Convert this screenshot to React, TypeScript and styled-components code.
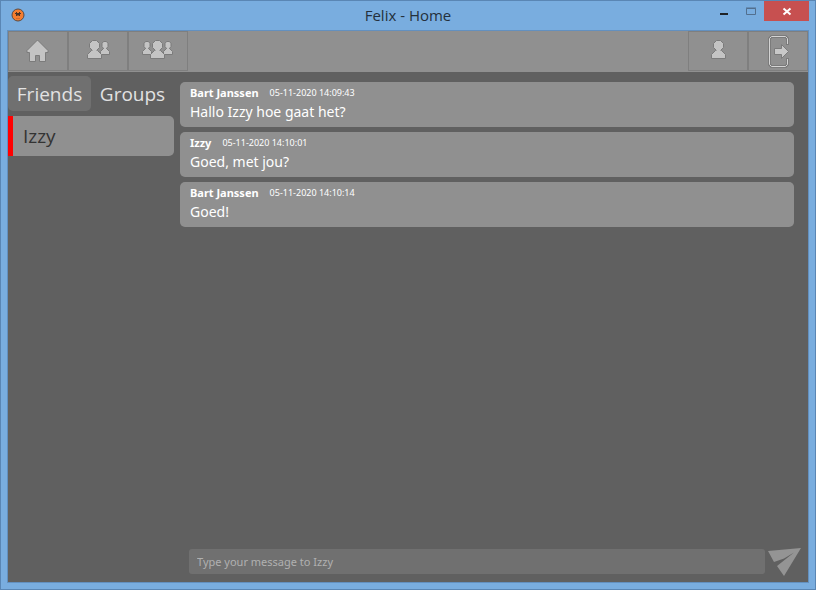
import React, { useState } from "react";
import styled, { createGlobalStyle } from "styled-components";

const GlobalStyle = createGlobalStyle`
  *, *::before, *::after { box-sizing: border-box; }
  body { margin: 0; }
  body, button, input { font-family: "Noto Sans", "Open Sans", sans-serif; }
  button { border: 0; padding: 0; background: none; cursor: pointer; }
`;

const WindowFrame = styled.div`
  display: flex;
  flex-direction: column;
  height: 100vh;
  padding: 0 6px 6px;
  border: 1px solid #5a86b4;
  background: #79addf;
`;

const TitleBar = styled.header`
  display: grid;
  grid-template-columns: 1fr auto 1fr;
  height: 29px;
  flex: none;
`;

const AppIcon = styled.svg`
  display: block;
  margin: 7px 0 0 4px;
`;

const Title = styled.h1`
  margin: 0;
  font-family: "Open Sans", "Noto Sans", sans-serif;
  font-size: 15px;
  font-weight: 400;
  line-height: 29px;
  color: #24303c;
`;

const WindowControls = styled.div`
  display: flex;
  justify-content: flex-end;
  align-items: flex-start;
`;

const WindowButton = styled.button<{ $close?: boolean }>`
  width: ${(p) => (p.$close ? 45 : 27)}px;
  height: 20px;
  background: ${(p) => (p.$close ? "#c75050" : "transparent")};

  svg { display: block; margin: 0 auto; }
`;

const Client = styled.div`
  display: flex;
  flex-direction: column;
  flex: 1;
  min-height: 0;
  border: 1px solid #6390bf;
  background: #606060;
`;

const Toolbar = styled.nav`
  display: flex;
  flex: none;
  height: 41px;
  background: #909090;
`;

const ToolGroup = styled.div<{ $end?: boolean }>`
  display: flex;
  margin-left: ${(p) => (p.$end ? "auto" : "0")};
`;

const ToolButton = styled.button`
  width: 60px;
  height: 40px;
  border: 1px solid #7f7f7f;

  svg { display: block; margin: 0 auto; }
`;

const Content = styled.div`
  display: flex;
  flex: 1;
  min-height: 0;
`;

const Sidebar = styled.aside`
  flex: none;
  width: 166px;
  padding-top: 4px;
`;

const Tabs = styled.div`
  display: flex;
  margin-bottom: 5px;
`;

const Tab = styled.button<{ $active: boolean }>`
  height: 35px;
  flex: 1 1 0;
  padding-top: 2px;
  border-radius: 5px;
  font-family: "Open Sans", "Noto Sans", sans-serif;
  font-size: 19px;
  line-height: 33px;
  color: #e2e2e2;
  background: ${(p) => (p.$active ? "#707070" : "transparent")};
`;

const Contact = styled.button`
  display: block;
  width: 100%;
  height: 40px;
  padding-left: 10px;
  border-left: 5px solid #ff0000;
  border-radius: 0 5px 5px 0;
  font-family: "Open Sans", "Noto Sans", sans-serif;
  font-size: 19px;
  line-height: 40px;
  text-align: left;
  color: #333333;
  background: #909090;
`;

const Chat = styled.main`
  display: flex;
  flex-direction: column;
  flex: 1;
  min-width: 0;
`;

const MessageList = styled.div`
  display: flex;
  flex-direction: column;
  gap: 5px;
  flex: 1;
  min-height: 0;
  padding: 10px 14px 0 6px;
`;

const MessageCard = styled.article`
  height: 45px;
  flex: none;
  padding: 2px 10px 0;
  border-radius: 5px;
  color: #ffffff;
  background: #909090;
`;

const MessageHead = styled.div`
  display: flex;
  gap: 11px;
  line-height: 18px;
`;

const Author = styled.strong`
  font-size: 11px;
  font-weight: 700;
`;

const Stamp = styled.time`
  font-size: 9px;
`;

const MessageText = styled.p`
  margin: 0;
  font-size: 14px;
  line-height: 20px;
`;

const Composer = styled.form`
  display: flex;
  align-items: center;
  gap: 3px;
  flex: none;
  padding: 0 6px 6px 15px;
`;

const MessageInput = styled.input`
  flex: 1;
  min-width: 0;
  height: 25px;
  padding: 0 8px;
  border: 0;
  border-radius: 3px;
  outline: 0;
  font-size: 11px;
  color: #ffffff;
  background: #707070;

  &::placeholder { color: #b0b0b0; opacity: 1; }
`;

const SendButton = styled.button`
  width: 34px;
  height: 30px;

  svg { display: block; }
`;

const Person = ({ x, y }: { x: number; y: number }) => (
  <g transform={`translate(${x} ${y})`}>
    <path d="M4.500 10.500h6l4 4v4H.5v-4z" />
    <path d="M5.500.5h4l3 3v4l-3 3h-4l-3-3v-4z" />
    <path d="M5.500 10h4v1.500h-4z" stroke="none" />
  </g>
);

const SmallPerson = ({ x, y }: { x: number; y: number }) => (
  <g transform={`translate(${x} ${y})`}>
    <path d="M3.500 7.500h3l3 3v3h-9v-3z" />
    <path d="M3.500.5h3l1.500 2v3l-1.500 2h-3L2 5.500v-3z" />
    <path d="M4 7h2v1.500H4z" stroke="none" />
  </g>
);

const iconStyle = { fill: "#c4c4c4", stroke: "#7b7b7b", strokeWidth: 1 };

const HomeIcon = () => (
  <svg width="58" height="38" {...iconStyle}>
    <path d="M28.500 8L18 18.500v2h2.500v9h6v-6h4v6h6v-9H39v-2z" />
  </svg>
);

const FriendsIcon = () => (
  <svg width="58" height="38" {...iconStyle}>
    <SmallPerson x={31} y={9} />
    <Person x={18} y={8} />
  </svg>
);

const GroupIcon = () => (
  <svg width="58" height="38" {...iconStyle}>
    <SmallPerson x={13} y={9} />
    <SmallPerson x={34} y={9} />
    <Person x={21} y={8} />
  </svg>
);

const ProfileIcon = () => (
  <svg width="58" height="38" {...iconStyle}>
    <Person x={22} y={8} />
  </svg>
);

const LogoutIcon = () => (
  <svg width="58" height="38" fill="none">
    <path d="M38.500 13V6.500l-2-2h-14l-2 2v26l2 2h14l2-2V26" stroke="#7b7b7b" strokeWidth="3" />
    <path d="M38.500 12V6.500l-2-2h-14l-2 2v26l2 2h14l2-2V27" stroke="#d4d4d4" />
    <path d="M25.500 16.500h7v-4l7 7-7 7v-4h-7z" fill="#c8c8c8" stroke="#7b7b7b" />
  </svg>
);

const messages = [
  { author: "Bart Janssen", time: "05-11-2020 14:09:43", text: "Hallo Izzy hoe gaat het?" },
  { author: "Izzy", time: "05-11-2020 14:10:01", text: "Goed, met jou?" },
  { author: "Bart Janssen", time: "05-11-2020 14:10:14", text: "Goed!" },
];

export default function App() {
  const [tab, setTab] = useState("Friends");
  const [draft, setDraft] = useState("");

  return (
    <>
      <GlobalStyle />
      <WindowFrame>
        <TitleBar>
          <AppIcon width="14" height="14" viewBox="0 0 14 14">
            <circle cx="7" cy="7" r="6" fill="#f47d30" stroke="#5b4b43" />
            <path d="M5 4h1v1h2V4h1v1h1v1H9v2H8V7.500H6V8H5V6H4V5h1z" fill="#4a3328" />
            <path d="M5 10.500h4" stroke="#d06a2c" />
          </AppIcon>
          <Title>Felix - Home</Title>
          <WindowControls>
            <WindowButton aria-label="Minimize">
              <svg width="27" height="20"><path d="M10 13h8" stroke="#1e2226" strokeWidth="2" /></svg>
            </WindowButton>
            <WindowButton aria-label="Maximize">
              <svg width="27" height="20"><path d="M9.500 7.500h9v6h-9zM9 7h10" fill="none" stroke="#526f8e" /></svg>
            </WindowButton>
            <WindowButton $close aria-label="Close">
              <svg width="45" height="20"><path d="M19.500 7.500l7 6M26.500 7.500l-7 6" stroke="#ffffff" strokeWidth="2" /></svg>
            </WindowButton>
          </WindowControls>
        </TitleBar>
        <Client>
          <Toolbar>
            <ToolGroup>
              <ToolButton aria-label="Home"><HomeIcon /></ToolButton>
              <ToolButton aria-label="Friends list"><FriendsIcon /></ToolButton>
              <ToolButton aria-label="Groups list"><GroupIcon /></ToolButton>
            </ToolGroup>
            <ToolGroup $end>
              <ToolButton aria-label="Profile"><ProfileIcon /></ToolButton>
              <ToolButton aria-label="Log out"><LogoutIcon /></ToolButton>
            </ToolGroup>
          </Toolbar>
          <Content>
            <Sidebar>
              <Tabs role="tablist">
                {["Friends", "Groups"].map((name) => (
                  <Tab
                    key={name}
                    role="tab"
                    aria-selected={tab === name}
                    $active={tab === name}
                    onClick={() => setTab(name)}
                  >
                    {name}
                  </Tab>
                ))}
              </Tabs>
              <Contact>Izzy</Contact>
            </Sidebar>
            <Chat>
              <MessageList>
                {messages.map((m) => (
                  <MessageCard key={m.time}>
                    <MessageHead>
                      <Author>{m.author}</Author>
                      <Stamp>{m.time}</Stamp>
                    </MessageHead>
                    <MessageText>{m.text}</MessageText>
                  </MessageCard>
                ))}
              </MessageList>
              <Composer onSubmit={(e) => e.preventDefault()}>
                <MessageInput
                  aria-label="Message"
                  placeholder="Type your message to Izzy"
                  value={draft}
                  onChange={(e) => setDraft(e.target.value)}
                />
                <SendButton type="submit" aria-label="Send">
                  <svg width="34" height="30" fill="#949494">
                    <path d="M0 5L33 2 16 30 9 20 26 6.500 16 12.500 6 16z" />
                  </svg>
                </SendButton>
              </Composer>
            </Chat>
          </Content>
        </Client>
      </WindowFrame>
    </>
  );
}
